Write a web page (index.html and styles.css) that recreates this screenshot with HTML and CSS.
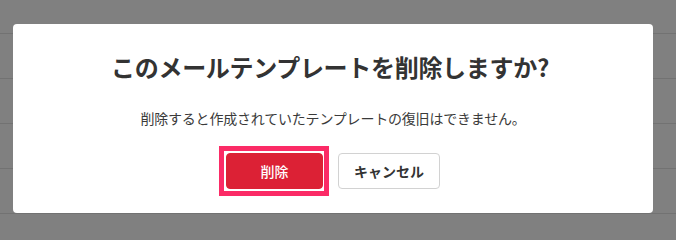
FILE: index.html
```html
<!DOCTYPE html>
<html lang="ja">
<head>
<meta charset="utf-8">
<link rel="stylesheet" href="styles.css">
</head>
<body>
<div class="dialog">
  <h2 class="dialog-title">このメールテンプレートを削除しますか?</h2>
  <p class="dialog-text">削除すると作成されていたテンプレートの復旧はできません。</p>
  <div class="dialog-actions">
    <button class="btn btn-danger is-focused">削除</button>
    <button class="btn btn-default">キャンセル</button>
  </div>
</div>
</body>
</html>
```
FILE: styles.css
```css
html, body {
  margin: 0;
  padding: 0;
}
body {
  width: 676px;
  height: 228px;
  overflow: hidden;
  background-color: #808080;
  background-image: repeating-linear-gradient(to bottom,
    transparent 0, transparent 33px, #727272 33px, #727272 34px, transparent 34px, transparent 45px);
  font-family: "Noto Sans CJK JP", "Noto Sans", sans-serif;
  color: #333;
  padding-top: 24px;
  box-sizing: border-box;
}
.dialog {
  margin-left: 13px;
  width: 640px;
  height: 189px;
  box-sizing: border-box;
  background: #fff;
  border-radius: 4px;
  padding-top: 25px;
  display: flex;
  flex-direction: column;
  align-items: center;
}
.dialog-title {
  margin: 0 0 0 -6px;
  font-size: 24px;
  line-height: 36px;
  font-weight: 700;
  color: #333;
  letter-spacing: -0.3px;
}
.dialog-text {
  margin: 23px 0 0;
  font-size: 14px;
  line-height: 20px;
  color: #3a3a3a;
  letter-spacing: -0.2px;
}
.dialog-actions {
  margin-top: 25px;
  display: flex;
  gap: 15px;
}
.btn {
  height: 36px;
  box-sizing: border-box;
  border-radius: 4px;
  font-family: inherit;
  font-size: 14px;
  font-weight: 700;
  line-height: 20px;
  padding: 0;
  white-space: nowrap;
  cursor: pointer;
}
.btn-danger {
  position: relative;
  width: 97px;
  background: #dc2135;
  border: 1px solid #dc2135;
  color: #fff;
  font-weight: 500;
}
.btn-default {
  width: 102px;
  background: #fff;
  border: 1px solid #d2d2d2;
  color: #333;
}
.is-focused::after {
  content: "";
  position: absolute;
  top: -8px;
  left: -8px;
  right: -7px;
  bottom: -8px;
  border: 5px solid #fb2b66;
}
```
